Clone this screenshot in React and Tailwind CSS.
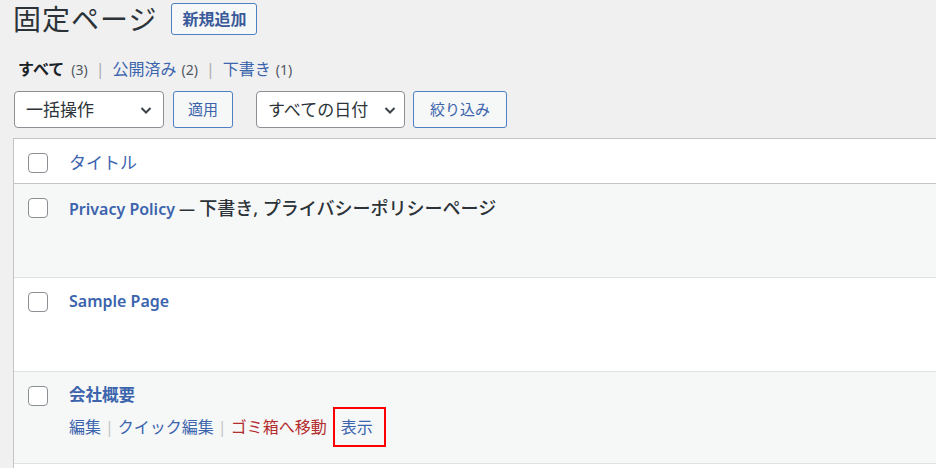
import React from 'react'

const FONT = { fontFamily: '"Noto Sans", "Noto Sans CJK JP", sans-serif' }

function Chevron() {
  return (
    <svg width="16" height="16" viewBox="0 0 16 16" className="shrink-0">
      <path d="M3.5 6 L8 10.5 L12.5 6" fill="none" stroke="#3c434a" strokeWidth="2" />
    </svg>
  )
}

function Box() {
  return <span className="block w-[20px] h-[20px] rounded-[4px] border border-[#8c8f94] bg-white shrink-0" />
}

function Sep() {
  return <span className="text-[#c3c4c7] px-[4px]">|</span>
}

function Row({ bg, children, h = 'h-[94px]' }) {
  return (
    <div className={`flex ${h} border-b border-[#e1e2e4] ${bg}`}>
      <div className="w-[55px] pl-[14px] pt-[14px]"><Box /></div>
      <div className="flex-1 pt-[11px]">{children}</div>
    </div>
  )
}

export default function App() {
  return (
    <div style={FONT} className="w-[936px] h-[468px] overflow-hidden bg-[#f0f0f1] text-[#3c434a]">
      {/* Title */}
      <div className="flex items-center h-[32px] mt-[3px] pl-[13px]">
        <h1 className="text-[28px] leading-none font-normal text-[#2c3338] tracking-[1px]">固定ページ</h1>
        <button className="ml-[14px] h-[32px] px-[10px] border border-[#4f7fc4] rounded-[3px] bg-[#f6f7f7] text-[#3a5a9a] text-[16px] font-semibold leading-none">新規追加</button>
      </div>

      {/* Filters */}
      <div className="flex items-center h-[20px] mt-[24px] pl-[18px] text-[16px]">
        <span className="font-bold text-[#1d2327]">すべて</span>
        <span className="text-[#50575e] text-[14px] ml-[7px]">(3)</span>
        <span className="text-[#a7aaad] mx-[8px]">|</span>
        <span className="text-[#3b64ad]">公開済み</span>
        <span className="text-[#50575e] text-[14px] ml-[5px]">(2)</span>
        <span className="text-[#a7aaad] mx-[8px]">|</span>
        <span className="text-[#3b64ad]">下書き</span>
        <span className="text-[#50575e] text-[14px] ml-[5px]">(1)</span>
      </div>

      {/* Toolbar */}
      <div className="flex items-center mt-[12px] pl-[14px] h-[37px]">
        <div className="flex items-center justify-between w-[150px] h-[37px] border border-[#8c8f94] rounded-[4px] bg-white pl-[11px] pr-[9px] text-[17px] text-[#2c3338]">
          <span>一括操作</span>
          <Chevron />
        </div>
        <button className="ml-[9px] w-[60px] h-[37px] border border-[#4f7fc4] rounded-[3px] bg-[#f6f7f7] text-[#3b64ad] text-[15px]">適用</button>
        <div className="ml-[23px] flex items-center justify-between w-[149px] h-[37px] border border-[#8c8f94] rounded-[4px] bg-white pl-[11px] pr-[6px] text-[17px] text-[#2c3338]">
          <span>すべての日付</span>
          <Chevron />
        </div>
        <button className="ml-[8px] w-[94px] h-[37px] border border-[#4f7fc4] rounded-[3px] bg-[#f6f7f7] text-[#3b64ad] text-[15px]">絞り込み</button>
      </div>

      {/* Table */}
      <div className="ml-[13px] mt-[10px] border-l border-t border-[#c3c4c7] bg-white">
        <div className="flex items-center h-[45px] pt-[3px] border-b border-[#c3c4c7]">
          <div className="w-[55px] pl-[14px]"><Box /></div>
          <span className="text-[17px] text-[#3b64ad]">タイトル</span>
        </div>

        <Row bg="bg-[#f6f7f7]">
          <div className="text-[16px] font-semibold text-[#3b64ad]">
            Privacy Policy<span className="text-[#2c3338]"> — <span className="text-[18px] font-medium">下書き, プライバシーポリシーページ</span></span>
          </div>
        </Row>

        <Row bg="bg-white">
          <div className="text-[16px] font-semibold text-[#3b64ad]">Sample Page</div>
        </Row>

        <Row bg="bg-[#f6f7f7]" h="h-[92px]">
          <div className="text-[16.5px] font-semibold text-[#3b64ad]">会社概要</div>
          <div className="flex items-center mt-[7px] text-[16px] text-[#3b64ad]">
            <span>編集</span>
            <Sep />
            <span>クイック編集</span>
            <Sep />
            <span className="text-[#b32d2e]">ゴミ箱へ移動</span>
            <span className="ml-[6px] -my-[10px] h-[40px] w-[53px] border-2 border-[#ff0000] flex items-center pl-[6px]">表示</span>
          </div>
        </Row>

        <div className="h-[20px] bg-white" />
      </div>
    </div>
  )
}
